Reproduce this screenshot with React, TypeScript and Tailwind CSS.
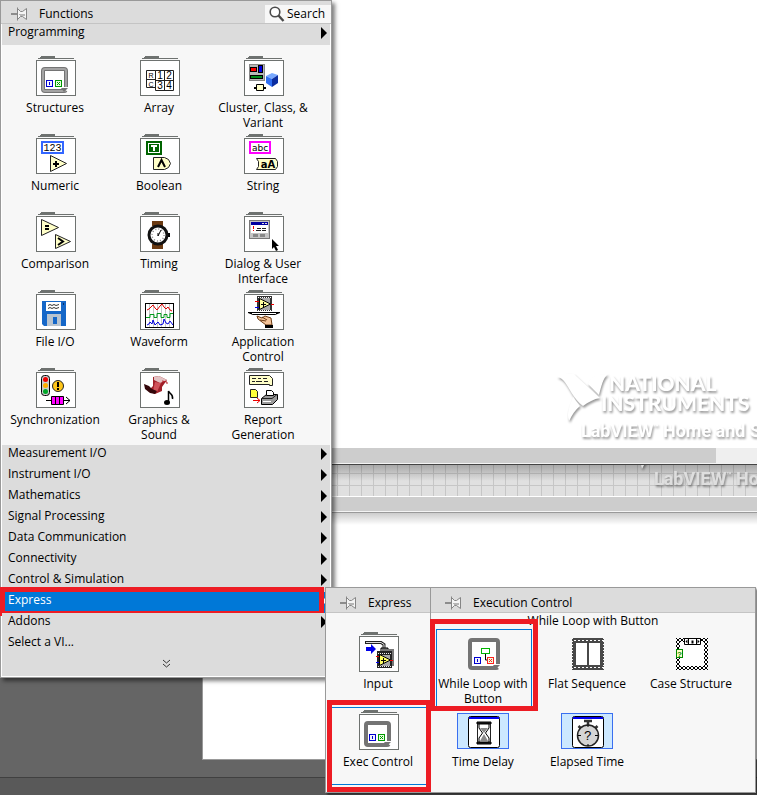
import React from "react";
import clsx from "clsx";

type PaletteItem = {
  label: string;
  icon: React.ReactNode;
  selected?: boolean;
  callout?: string;
};

const PinIcon = () => (
  <svg width="16" height="14" viewBox="0 0 16 14" aria-hidden="true">
    <path d="M0 6h6v2H0z" fill="#8c8c8c" />
    <path
      d="M6.5.5v13M6.500 1.500l3 3h2l4-3v11l-4-3h-2l-3 3z"
      fill="#f4f4f4"
      stroke="#858585"
    />
    <path d="M9 8.500h5M8 7.500h6" stroke="#b5b5b5" />
  </svg>
);

const SearchIcon = () => (
  <svg width="16" height="16" viewBox="0 0 16 16" aria-hidden="true">
    <circle cx="6" cy="6" r="4.800" fill="#fff" stroke="#4a4a4a" strokeWidth="1.600" />
    <path d="M9.500 9.500l5 5.500" stroke="#4a4a4a" strokeWidth="2.400" />
  </svg>
);

const SubmenuArrow = () => (
  <svg width="6" height="12" viewBox="0 0 6 12" aria-hidden="true">
    <path d="M0 0l6 6-6 6z" fill="currentColor" />
  </svg>
);

const Folder = ({ children }: { children: React.ReactNode }) => (
  <svg width="40" height="42" viewBox="0 0 40 42" aria-hidden="true">
    <path d="M4 3V2l1-1h13l1 1v1h19v1H2V3z" fill="#6e7270" shapeRendering="crispEdges" />
    <rect x=".5" y="5.5" width="39" height="35" fill="#fff" stroke="#6e7270" />
    {children}
  </svg>
);

const Glyph = ({ children }: { children: React.ReactNode }) => (
  <svg width="32" height="42" viewBox="0 -7 32 42" aria-hidden="true">
    {children}
  </svg>
);

const ExpressGlyph = ({ children }: { children: React.ReactNode }) => (
  <svg width="54" height="42" viewBox="0 -4 54 42" aria-hidden="true">
    <rect x=".5" y=".5" width="51" height="35" fill="#cce8ff" stroke="#3a6ff0" />
    <rect x="11.5" y="3.5" width="31" height="31" rx="2" fill="#fff" stroke="#000" />
    <path d="M12 4h30v2H12z" fill="#0000f0" />
    {children}
  </svg>
);

type TerminalProps = { x: number; y: number; color: string; stop?: boolean };

const Terminal = ({ x, y, color, stop }: TerminalProps) => (
  <g shapeRendering="crispEdges">
    <rect
      x={x + 0.5}
      y={y + 0.5}
      width="6"
      height="6"
      fill={stop ? "#e8ffe0" : "#f4f4ff"}
      stroke={color}
    />
    {stop ? (
      <path
        d={`M${x + 2} ${y + 2}h1v1h1v-1h1v1h-1v1h1v1h-1v-1h-1v1h-1v-1h1v-1h-1z`}
        fill={color}
      />
    ) : (
      <path d={`M${x + 3} ${y + 2}h1v3h-1z`} fill={color} />
    )}
  </g>
);

const LoopFrame = ({ shaded }: { shaded?: boolean }) => (
  <g>
    <rect
      x="7"
      y="14"
      width="23"
      height="22"
      rx="2"
      fill="#fff"
      stroke="#747474"
      strokeWidth="4"
    />
    {shaded && (
      <rect x="7" y="14" width="23" height="22" rx="2" fill="none" stroke="#a3a3a3" strokeWidth="2" />
    )}
    <path d="M26 32h7v6z" fill="#fff" />
    <path d="M25 33h7l-4 4z" fill="#747474" />
    <Terminal x={10} y={25} color="#0000d0" />
    <Terminal x={19} y={25} color="#009a00" stop />
  </g>
);

const ArrayArt = () => (
  <g fontFamily="Liberation Sans" fontSize="10" textAnchor="middle">
    <path
      d="M6.5 15.5h9v17h-9zM6.5 24.5h9M15.5 15.5h18v20h-18zM24.5 15.5v20M15.5 25.5h18"
      fill="#fff"
      stroke="#222"
    />
    <text x="11" y="23" fontSize="7">R</text>
    <text x="11" y="31.5" fontSize="7">C</text>
    <text x="20" y="24">1</text>
    <text x="29" y="24">2</text>
    <text x="20" y="34">3</text>
    <text x="29" y="34">4</text>
  </g>
);

const ClusterArt = () => (
  <g>
    <rect x="5.5" y="9.5" width="15" height="16" fill="#b8b8b8" stroke="#888" />
    <rect x="6.5" y="12.5" width="6" height="4" fill="#f00" stroke="#000" />
    <rect x="14.5" y="10.5" width="4" height="7" fill="#0000e0" stroke="#000" />
    <rect x="6.5" y="20.5" width="12" height="3" fill="#008a1a" stroke="#000" />
    <path d="M22 21l6-3 6 2-6 4z" fill="#79a9ff" />
    <path d="M22 21l6 3v8l-6-4z" fill="#2f6ff2" />
    <path d="M28 24l6-4v8l-6 4z" fill="#0b2da0" />
    <path d="M10 32h12v2H10z" fill="#000" />
    <path d="M12.500 29.500h7v6h-7z" fill="#ffffc8" stroke="#000" />
  </g>
);

const NumericArt = () => (
  <g>
    <rect x="6" y="9" width="21" height="11" fill="#fff" stroke="#3366ff" strokeWidth="2" />
    <text x="16.5" y="18" fontFamily="Liberation Mono" fontSize="10" textAnchor="middle">
      123
    </text>
    <path d="M14.5 22.5v16l16-8z" fill="#ffffc8" stroke="#222" />
    <path d="M17 30h6v2h-6zM19 28h2v6h-2z" fill="#000" />
  </g>
);

const BooleanArt = () => (
  <g>
    <rect x="7" y="9" width="14" height="12" fill="#006400" stroke="#006400" strokeWidth="2" />
    <rect x="8.5" y="10.5" width="11" height="9" fill="#006400" stroke="#fff" />
    <path d="M11 13h6M14 12v6" stroke="#fff" strokeWidth="2" />
    <path d="M13.500 24.500h11l4 2 2 4-2 4-4 2h-11z" fill="#ffffc8" stroke="#222" />
    <path d="M18 34l3.500-7 3.500 7" fill="none" stroke="#000" strokeWidth="2" />
  </g>
);

const StringArt = () => (
  <g>
    <rect x="6" y="9" width="20" height="11" fill="#fff" stroke="#f0f" strokeWidth="2" />
    <text x="16" y="18" fontFamily="DejaVu Sans" fontSize="9" textAnchor="middle">
      abc
    </text>
    <path d="M12.500 25.500h19l2 3v5l-2 3h-19l2-3v-5z" fill="#ffffc8" stroke="#222" />
    <text x="24" y="35" fontFamily="DejaVu Sans" fontWeight="bold" fontSize="10" textAnchor="middle">
      aA
    </text>
  </g>
);

const ComparisonArt = () => (
  <g>
    <path d="M5.500 8.500v16l17-8zM19.500 23.500v14l15-7z" fill="#ffffc8" stroke="#222" />
    <path d="M9 14h4v2H9zM9 17h4v2H9z" fill="#000" />
    <path d="M22 27l5 3.500-5 3.500" fill="none" stroke="#000" strokeWidth="2" />
  </g>
);

const WatchArt = () => (
  <g>
    <path d="M12 10h11v5H12zM12 33h11v5H12z" fill="#6b3a12" />
    <path d="M28 22h2v4h-2z" fill="#000" />
    <circle cx="18" cy="24" r="9" fill="#fff" stroke="#111" strokeWidth="3" />
    <circle cx="18" cy="24" r="6" fill="none" stroke="#888" strokeWidth="1.500" strokeDasharray="1 2.100" />
    <path d="M18 25l3-6M18 25v-3" stroke="#000" />
  </g>
);

const DialogArt = () => (
  <g>
    <rect x="5.500" y="9.500" width="20" height="18" fill="#c4c4c4" stroke="#777" />
    <path d="M7 11h17v3H7z" fill="#0000a0" />
    <path d="M18 12h2v1h-2zM21 12h2v1h-2z" fill="#ddd" />
    <path d="M7 14h17v8H7z" fill="#fff" />
    <path d="M9.500 15v3M9.500 19v1" stroke="#e00" />
    <path d="M13 17.500h4M18 17.500h4M12 19.500h5M18 19.500h4" stroke="#222" />
    <path d="M9 23h5v3H9zM16 23h5v3h-5z" fill="#888" />
    <path d="M28 28v10l2-2 2 4 2-1-2-4h3z" fill="#000" />
  </g>
);

const FileArt = () => (
  <g>
    <path d="M6 12h24v25H8l-2-2z" fill="#1567c8" />
    <path d="M27 14h1v2h-1z" fill="#06306a" />
    <path d="M10 13h15v9H10z" fill="#fff" />
    <path d="M12 16.500l2-1 2 1 2-1 2 1 3-1M12 19.500l2-1 2 1 2-1 2 1 3-1" fill="none" stroke="#333" />
    <path d="M11 25h14v12H11z" fill="#b9c4cf" />
    <path d="M17 28h4v7h-4z" fill="#1567c8" />
  </g>
);

const WaveformArt = () => (
  <g fill="none">
    <rect x="5.500" y="14.500" width="28" height="24" fill="#fff" stroke="#000" />
    <path d="M9.500 15v23M13.500 15v23M17.500 15v23M21.500 15v23M25.500 15v23M29.500 15v23" stroke="#c8c8c8" />
    <path d="M7 21l2-1 2-2 2-2 2 3 2 2 3-4 2-2 2 3 2 2 2-2 2 3 2 1" stroke="#e00000" />
    <path d="M6 28.500h4v-3h4v3h3v-4h4v4h3v-3h3v3h3v-4h3" stroke="#009a1a" />
    <path d="M7 36l2-1 1-2 2 2 1-4 2 5 3-3 2 3 3-1 1-5 2 4 2 1 2-3 3 4" stroke="#0000e0" />
  </g>
);

const ApplicationArt = () => (
  <g>
    <path d="M13 7h15v15H13z" fill="#333" />
    <path d="M15 9h11v12H15z" fill="#a8a8a8" />
    <path d="M14 8.500h13M14 21.500h13" stroke="#fff" strokeDasharray="1 1" />
    <path d="M15.500 9.500v11l11-5.500z" fill="#ffffa0" stroke="#000" />
    <path d="M17 15.500h5M19.500 13v5" stroke="#000" />
    <path d="M11 12.500h4M27 15.500h3" stroke="#e00" />
    <path d="M11 18.500h4" stroke="#00e" />
    <path d="M4 23h32v1l-5 2H9l-5-2z" fill="#000" />
    <path d="M8 24h24v1H8z" fill="#fff" />
    <path d="M13 27l5 2 3-2 6 2 1 7h-6l-8-6z" fill="#f4c49a" stroke="#6b3a12" />
    <path d="M16 31l6 1M18 28l5 3" stroke="#6b3a12" />
    <path d="M21 36h8v3h-8z" fill="#000" />
  </g>
);

const SyncArt = () => (
  <g>
    <rect x="5.500" y="8.500" width="8" height="20" rx="3" fill="#ccc" stroke="#000" />
    <circle cx="9.500" cy="12.500" r="2.500" fill="#e00" />
    <circle cx="9.500" cy="18.500" r="2.500" fill="#ffae00" />
    <circle cx="9.500" cy="24.500" r="2.500" fill="#00a82a" />
    <circle cx="22" cy="19" r="5.500" fill="#ffc61a" stroke="#222" />
    <path d="M22 15v5M22 21v2" stroke="#000" strokeWidth="2" />
    <path d="M10 33.500h24M30 30l4 3.500-4 3.500" fill="none" stroke="#000" />
    <path d="M15.500 29.500h12v8h-12zM19.500 29.500v8M23.500 29.500v8" fill="#f0f" stroke="#000" />
  </g>
);

const GraphicsArt = () => (
  <g>
    <path d="M13 10l6-1 8 4-5 7v4l-7 3-7-3 5-5z" fill="#a01f28" />
    <path d="M14 10l5-1 8 4-7 3-6-3z" fill="#e3c2c3" />
    <path d="M15 15l6 1-4 9-4-1z" fill="#d0525a" />
    <path d="M4 17l5 2 3 3 5 2-2 3-5-1-5-4z" fill="#33060a" />
    <path d="M22 14l5 1v2" stroke="#b5202a" fill="none" />
    <path d="M28.500 35V24c1 3 5 3 4 8" fill="none" stroke="#000" strokeWidth="1.500" />
    <ellipse cx="27" cy="35.500" rx="3" ry="2.500" fill="#000" />
  </g>
);

const ReportArt = () => (
  <g>
    <path d="M5.500 8.500h20l3 3v7h-3v-1h-20z" fill="#ffffc8" stroke="#222" />
    <path d="M8 11.500h4M14 11.500h3M19 11.500h4M8 14.500h3M12 14.500h6M20 14.500h4" stroke="#222" />
    <path d="M6.500 22.500h5l2 2v6h-7z" fill="#ffff3a" stroke="#222" />
    <path d="M9 33.500h7M13 31l3 2.500-3 2.500" fill="none" stroke="#e00" />
    <path d="M17.500 31.500l5-4h11v5l-5 5h-11z" fill="#9a9a9a" stroke="#000" />
    <path d="M18 31.500h10l5-4" fill="none" stroke="#222" />
    <path d="M22.500 28.500v-5h5l2 2v3z" fill="#fff" stroke="#000" />
    <path d="M19 34.500h8" stroke="#fff" />
  </g>
);

const InputArt = () => (
  <g>
    <path d="M6 11.500h16l3 2v4" fill="none" stroke="#222" strokeWidth="3" />
    <path d="M7 11.500h15l3 2v4" fill="none" stroke="#ddd" />
    <path d="M7 16h5v-3l5 5-5 5v-3H7z" fill="#0000e8" />
    <path d="M22 17h7v3h-7z" fill="#777" stroke="#000" />
    <path d="M21 18h14v17H21z" fill="#777" />
    <path d="M18 20h15v17H18z" fill="#222" />
    <path d="M20 24h11v11H20z" fill="#a8a8a8" />
    <path d="M19 22.500h13M19 35.500h13" stroke="#eee" strokeDasharray="1 1" />
    <path d="M20.500 23.500v11l11-5.500z" fill="#ffff66" stroke="#000" />
    <path d="M22 29.500h5M24.500 27v5" stroke="#000" />
    <path d="M17 25.500h3M31 29.500h3" stroke="#e00" />
    <path d="M17 31.500h3" stroke="#00e" />
  </g>
);

const WhileLoopIcon = () => (
  <Glyph>
    <rect x="2" y="2" width="28" height="28" rx="2" fill="#fff" stroke="#747474" strokeWidth="4" />
    <path d="M26 26h6v6z" fill="#f7f7f7" />
    <path d="M25 27h7l-4 4z" fill="#747474" />
    <rect x="13.500" y="10.500" width="8" height="5" fill="#fff" stroke="#00b400" />
    <path d="M17.500 16v6h2" fill="none" stroke="#000" />
    <Terminal x={6} y={19} color="#0000d0" />
    <Terminal x={19} y={19} color="#ff2020" stop />
  </Glyph>
);

const FlatSequenceIcon = () => (
  <Glyph>
    <path d="M0 0h32v32H0z" fill="#484848" />
    <path d="M2 2.500h30M2 29.500h30" stroke="#fff" strokeDasharray="2 2" />
    <path d="M.5 0v32M31.500 0v32" stroke="#f7f7f7" strokeDasharray="1 2" />
    <path d="M4 5h11v22H4zM17 5h11v22H17z" fill="#fff" />
  </Glyph>
);

const CaseStructureIcon = () => (
  <Glyph>
    <defs>
      <pattern id="weave" width="4" height="4" patternUnits="userSpaceOnUse">
        <path d="M0 0h4v4H0z" fill="#fff" />
        <path d="M0 0h1v1h1v1h1v1h1v1h-1v-1h-1v-1h-1v-1h-1zM3 0h1v1h-1zM2 1h1v1h-1zM0 3h1v1h-1zM1 2h1v1h-1z" fill="#000" />
      </pattern>
    </defs>
    <path d="M0 0h32v32H0z" fill="url(#weave)" shapeRendering="crispEdges" />
    <path d="M4 4h24v24H4z" fill="#fff" />
    <path d="M8.500.5h16v6h-16zM12.500.5v6M20.500.5v6" fill="#fff" stroke="#000" />
    <path d="M11.500 1.500v4l-2-2zM21.500 1.500v4l2-2zM15.500 2.500h2v3h-2z" fill="#000" />
    <rect x=".5" y="11.500" width="6" height="8" fill="#ffffc8" stroke="#008a00" />
    <text x="3.500" y="18.500" fontFamily="Liberation Sans" fontWeight="bold" fontSize="8" textAnchor="middle" fill="#008a00">
      ?
    </text>
  </Glyph>
);

const TimeDelayIcon = () => (
  <ExpressGlyph>
    <path d="M20 9h14v2H20zM20 29h14v2H20z" fill="#222" stroke="#000" />
    <path d="M22 11v4l3.500 5-3.500 5v4h10v-4l-3.500-5 3.500-5v-4z" fill="#fff" stroke="#000" />
    <path d="M23 15h8l-4 5zM27 21l4 7h-8z" fill="#8a8a8a" />
    <path d="M20.500 11v18M33.500 11v18" stroke="#222" />
  </ExpressGlyph>
);

const ElapsedTimeIcon = () => (
  <ExpressGlyph>
    <path d="M23 8h8M27 8v4M17.500 13l3 3M36.500 13l-3 3" stroke="#333" strokeWidth="2.500" />
    <circle cx="27" cy="22.500" r="10.500" fill="#d4d4d4" stroke="#222" strokeWidth="1.500" />
    <path d="M17 22.500h3M34 22.500h3M27 12v2M27 31v2" stroke="#000" />
    <text x="27" y="27" fontFamily="Liberation Mono" fontSize="13" textAnchor="middle">
      ?
    </text>
  </ExpressGlyph>
);

const programmingItems: PaletteItem[] = [
  { label: "Structures", icon: <Folder><LoopFrame shaded /></Folder> },
  { label: "Array", icon: <Folder><ArrayArt /></Folder> },
  { label: "Cluster, Class, & Variant", icon: <Folder><ClusterArt /></Folder> },
  { label: "Numeric", icon: <Folder><NumericArt /></Folder> },
  { label: "Boolean", icon: <Folder><BooleanArt /></Folder> },
  { label: "String", icon: <Folder><StringArt /></Folder> },
  { label: "Comparison", icon: <Folder><ComparisonArt /></Folder> },
  { label: "Timing", icon: <Folder><WatchArt /></Folder> },
  { label: "Dialog & User Interface", icon: <Folder><DialogArt /></Folder> },
  { label: "File I/O", icon: <Folder><FileArt /></Folder> },
  { label: "Waveform", icon: <Folder><WaveformArt /></Folder> },
  { label: "Application Control", icon: <Folder><ApplicationArt /></Folder> },
  { label: "Synchronization", icon: <Folder><SyncArt /></Folder> },
  { label: "Graphics & Sound", icon: <Folder><GraphicsArt /></Folder> },
  { label: "Report Generation", icon: <Folder><ReportArt /></Folder> },
];

const expressItems: PaletteItem[] = [
  { label: "Input", icon: <Folder><InputArt /></Folder> },
  {
    label: "Exec Control",
    icon: <Folder><LoopFrame /></Folder>,
    selected: true,
    callout: "inset-x-0 -inset-y-[7px]",
  },
];

const executionItems: PaletteItem[] = [
  {
    label: "While Loop with Button",
    icon: <WhileLoopIcon />,
    selected: true,
    callout: "-inset-x-0.5 -top-2.5 -bottom-1",
  },
  { label: "Flat Sequence", icon: <FlatSequenceIcon /> },
  { label: "Case Structure", icon: <CaseStructureIcon /> },
  { label: "Time Delay", icon: <TimeDelayIcon /> },
  { label: "Elapsed Time", icon: <ElapsedTimeIcon /> },
];

const categories = [
  "Measurement I/O",
  "Instrument I/O",
  "Mathematics",
  "Signal Processing",
  "Data Communication",
  "Connectivity",
  "Control & Simulation",
  "Express",
  "Addons",
  "Select a VI...",
];

const PaletteCell = ({ item }: { item: PaletteItem }) => (
  <li className="relative">
    {item.selected && (
      <span className="absolute inset-x-1 inset-y-0 border border-[#0078d7]" />
    )}
    {item.callout && (
      <span
        className={clsx(
          "pointer-events-none absolute z-10 border-5 border-[#ed1c24]",
          item.callout
        )}
      />
    )}
    <button className="relative flex w-full flex-col items-center pt-0.5 leading-[15px]">
      {item.icon}
      <span className="mt-[3px] w-24 pr-0.5 text-center">{item.label}</span>
    </button>
  </li>
);

const CategoryRow = ({ label }: { label: string }) => {
  const isActive = label === "Express";
  const hasSubmenu = label !== "Select a VI...";
  return (
    <li className={clsx("relative h-[21px]", isActive ? "bg-[#0078d7] text-white" : "bg-[#dcdcdc]")}>
      <button className="flex h-full w-full items-start justify-between pr-[3px] pl-1.5 leading-4">
        {label}
        {hasSubmenu && (
          <span className="pt-[3px]">
            <SubmenuArrow />
          </span>
        )}
      </button>
      {isActive && (
        <span className="pointer-events-none absolute -top-[5px] right-1.5 -bottom-[3px] -left-0.5 border-5 border-[#ed1c24]" />
      )}
    </li>
  );
};

const PanelHeader = ({ title }: { title: string }) => (
  <header className="flex h-[25px] items-center gap-3 border-b border-[#c4c4c4] bg-[#dcdcdc] pt-1.5 pl-[14px]">
    <PinIcon />
    <h2>{title}</h2>
  </header>
);

const Watermark = ({ className }: { className?: string }) => (
  <div
    className={clsx(
      "pointer-events-none absolute w-[260px] whitespace-nowrap drop-shadow-[1px_2px_1px_rgba(0,0,0,0.4)]",
      className
    )}
    aria-hidden="true"
  >
    <div className="flex">
      <svg width="52" height="50" viewBox="0 0 52 50" className="-mr-2 shrink-0">
        <path
          d="M0 4C4 0 12 0 17 1l26 24c-6 1-12 4-17 8C17 27 11 12 6 7 4 5 2 4 0 4zM51 1c-5 4-7 13-9 21L31 11c2-6 6-10 20-10zM16 24l7 9c-5 4-8 9-11 15-3-8 1-16 4-24z"
          fill="currentColor"
        />
      </svg>
      <div className="font-[Lato] text-[21px] leading-5 font-black">
        <p className="pl-2">NATIONAL</p>
        <p>INSTRUMENTS</p>
      </div>
    </div>
    <p className="-mt-1 pl-6 font-[Roboto] text-lg leading-6 font-bold">
      LabVIEW<span className="align-super text-[8px] leading-none">™</span> Home and Student
    </p>
  </div>
);

const Desktop = () => (
  <div className="flex min-h-screen flex-col bg-[#656565]">
    <div className="relative h-[448px] overflow-hidden bg-white">
      <Watermark className="top-[373px] left-[557px] text-white" />
    </div>
    <div className="h-4 border-b border-[#f4f4f4] bg-[#efefef]">
      <div className="mr-[41px] h-full bg-[#cdcdcd]" />
    </div>
    <div className="relative h-8 overflow-hidden border-t border-[#444] bg-[#e0e0e0] bg-[linear-gradient(#c6c6c6_1px,transparent_1px),linear-gradient(90deg,#c6c6c6_1px,transparent_1px)] bg-size-[12px_12px] bg-position-[1px_8px]">
      <div className="h-4 bg-linear-to-b from-black/25 to-transparent" />
      <Watermark className="-top-11 left-[630px] text-[#dedede]" />
    </div>
    <div className="h-4 border-y border-t-white border-b-[#f4f4f4] bg-[#cdcdcd]" />
    <div className="ml-[202px] flex flex-1 flex-col border-t border-b border-l border-[#999] bg-white">
      <div className="h-3 bg-linear-to-b from-black/20 to-transparent" />
    </div>
    <div className="mt-[17px] h-[18px] border-t border-[#404040] bg-[#595959]" />
  </div>
);

const FunctionsPalette = () => (
  <section className="absolute top-0 left-0 w-[332px] border border-[#999] bg-white shadow-[3px_3px_4px_rgba(0,0,0,0.5)]">
    <header className="flex h-[23px] items-end justify-between border-b border-[#c4c4c4] bg-[#dcdcdc]">
      <div className="flex items-center gap-3 pb-px pl-2.5">
        <PinIcon />
        <h1>Functions</h1>
      </div>
      <button className="flex h-[18px] items-center gap-0.5 bg-[#f7f7f7] pr-1.5 pl-1">
        <SearchIcon />
        Search
      </button>
    </header>
    <div className="px-px pb-px">
      <ul>
        <CategoryRow label="Programming" />
      </ul>
      <ul className="grid auto-rows-[78px] grid-cols-[repeat(3,104px)] bg-[#f7f7f7] pt-2 pb-0.5 pl-0.5">
        {programmingItems.map((item) => (
          <PaletteCell key={item.label} item={item} />
        ))}
      </ul>
      <ul>
        {categories.map((label) => (
          <CategoryRow key={label} label={label} />
        ))}
      </ul>
      <button aria-label="Show more" className="flex h-[21px] w-full justify-center bg-[#dcdcdc] pt-1">
        <svg width="9" height="9" viewBox="0 0 9 9" aria-hidden="true">
          <path d="M1 1l3.500 3L8 1M1 5l3.500 3L8 5" fill="none" stroke="#333" />
        </svg>
      </button>
    </div>
  </section>
);

const ExpressPalettes = () => (
  <div className="absolute top-[587px] left-[325px] flex border border-[#999] bg-[#f7f7f7] shadow-[2px_2px_2px_rgba(0,0,0,0.5)]">
    <section className="w-[105px] border-r border-[#999]">
      <PanelHeader title="Express" />
      <ul className="grid auto-rows-[78px] grid-cols-[104px] pt-4 pb-[7px] pl-px">
        {expressItems.map((item) => (
          <PaletteCell key={item.label} item={item} />
        ))}
      </ul>
    </section>
    <section className="w-[324px]">
      <PanelHeader title="Execution Control" />
      <p className="text-center leading-4">While Loop with Button</p>
      <ul className="grid auto-rows-[78px] grid-cols-[repeat(3,104px)] pb-[7px] pl-px">
        {executionItems.map((item) => (
          <PaletteCell key={item.label} item={item} />
        ))}
      </ul>
    </section>
  </div>
);

export default function App() {
  return (
    <main className="relative min-h-screen overflow-hidden font-['Open_Sans',sans-serif] text-xs text-black">
      <Desktop />
      <FunctionsPalette />
      <ExpressPalettes />
    </main>
  );
}
